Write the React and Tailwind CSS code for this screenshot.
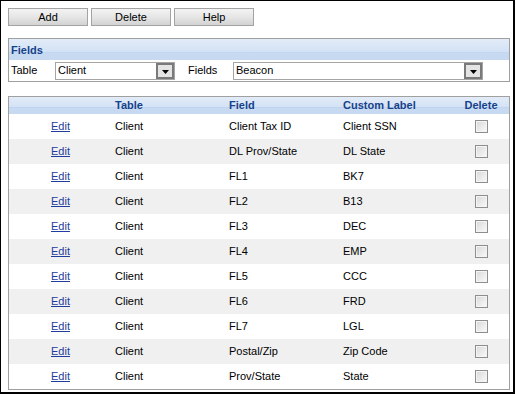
import React from 'react'

const rows = [
  ['Client Tax ID', 'Client SSN'],
  ['DL Prov/State', 'DL State'],
  ['FL1', 'BK7'],
  ['FL2', 'B13'],
  ['FL3', 'DEC'],
  ['FL4', 'EMP'],
  ['FL5', 'CCC'],
  ['FL6', 'FRD'],
  ['FL7', 'LGL'],
  ['Postal/Zip', 'Zip Code'],
  ['Prov/State', 'State'],
]

function ToolButton({ children }) {
  return (
    <button className="w-[80px] h-[18px] border border-[#a3a3a3] bg-gradient-to-b from-[#f3f3f3] via-[#e6e6e6] to-[#d2d2d2] text-[11px] leading-none text-black">
      {children}
    </button>
  )
}

function Select({ value, width }) {
  return (
    <div className={`${width} h-[18px] border border-[#a5a5a5] bg-white flex items-center justify-between`}>
      <span className="pl-[2px] text-[11px] leading-none">{value}</span>
      <div className="w-[18px] h-[16px] border-2 border-[#7a7a7a] bg-[#e4e4e4] flex items-end justify-center pb-[3px]">
        <svg width="7" height="4" viewBox="0 0 7 4">
          <path d="M0 0h7L3.5 4z" fill="#000" />
        </svg>
      </div>
    </div>
  )
}

function Checkbox() {
  return (
    <div className="w-[13px] h-[13px] border border-[#8e8e8e] bg-gradient-to-br from-[#d8d8d8] to-[#fbfbfb] shadow-[inset_0_0_0_1px_#f4f4f4]" />
  )
}

const headBand =
  'bg-[linear-gradient(to_bottom,#e3ecf8_0%,#d3e2f5_60%,#bcd2ef_62%,#c8daf2_66%,#c6d9f1_100%)]'

export default function App() {
  return (
    <div className="w-[516px] h-[395px] bg-white font-['Liberation_Sans',Arial,sans-serif] text-black">
      <div className="w-[515px] h-[394px] border-l border-t border-r-2 border-b-2 border-black pl-[7px] pt-[7px]">
        <div className="flex gap-[3px]">
          <ToolButton>Add</ToolButton>
          <ToolButton>Delete</ToolButton>
          <ToolButton>Help</ToolButton>
        </div>

        <div className="mt-[12px] w-[502px] border border-[#a0a0a0]">
          <div className={`h-[21px] ${headBand} flex items-center pl-[2px] pt-[1px] text-[11px] font-bold text-[#15428b]`}>
            Fields
          </div>
          <div className="h-[21px] flex items-center text-[11px]">
            <span className="pl-[2px] w-[46px]">Table</span>
            <Select value="Client" width="w-[120px]" />
            <span className="ml-[13px] w-[45px]">Fields</span>
            <Select value="Beacon" width="w-[250px]" />
          </div>
        </div>

        <div className="mt-[14px] w-[502px] border border-[#a0a0a0]">
          <div className={`h-[17px] ${headBand} grid grid-cols-[106px_114px_114px_110px_56px] items-center text-[11px] font-bold text-[#15428b]`}>
            <span />
            <span>Table</span>
            <span>Field</span>
            <span>Custom Label</span>
            <span className="text-center">Delete</span>
          </div>
          {rows.map(([field, label], i) => (
            <div
              key={field}
              className={`h-[25px] grid grid-cols-[106px_114px_114px_110px_56px] items-center text-[11px] ${i % 2 ? 'bg-[#f0f0f0]' : 'bg-white'}`}
            >
              <a href="#" className="pl-[42px] text-[#1f3d9c] underline">
                Edit
              </a>
              <span>Client</span>
              <span>{field}</span>
              <span>{label}</span>
              <span className="flex justify-center">
                <Checkbox />
              </span>
            </div>
          ))}
        </div>
      </div>
    </div>
  )
}
